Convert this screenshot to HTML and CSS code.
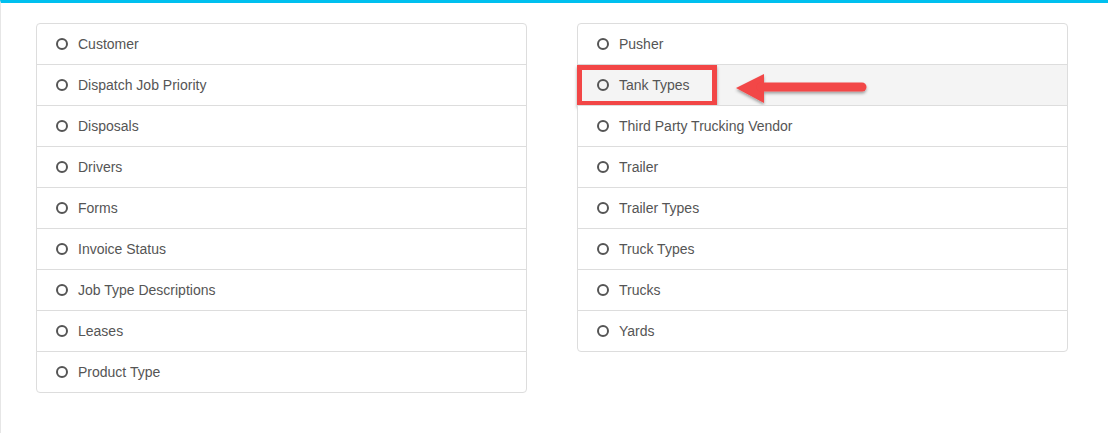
FILE: index.html
```html
<!DOCTYPE html>
<html>
<head>
<meta charset="utf-8">
<link rel="stylesheet" href="styles.css">
</head>
<body>
<div class="page">
  <div class="columns">
    <ul class="list">
      <li class="item"><span class="dot"></span>Customer</li>
      <li class="item"><span class="dot"></span>Dispatch Job Priority</li>
      <li class="item"><span class="dot"></span>Disposals</li>
      <li class="item"><span class="dot"></span>Drivers</li>
      <li class="item"><span class="dot"></span>Forms</li>
      <li class="item"><span class="dot"></span>Invoice Status</li>
      <li class="item"><span class="dot"></span>Job Type Descriptions</li>
      <li class="item"><span class="dot"></span>Leases</li>
      <li class="item"><span class="dot"></span>Product Type</li>
    </ul>
    <ul class="list">
      <li class="item"><span class="dot"></span>Pusher</li>
      <li class="item hover"><span class="dot"></span>Tank Types
        <span class="highlight"></span>
        <svg class="arrow" width="140" height="36" viewBox="0 0 140 36">
          <defs>
            <filter id="sh" x="-10%" y="-30%" width="120%" height="170%">
              <feDropShadow dx="0" dy="2" stdDeviation="1.5" flood-color="#000" flood-opacity="0.35"/>
            </filter>
          </defs>
          <g filter="url(#sh)" fill="#f24646">
            <polygon points="3,16 31,2 31,31"/>
            <line x1="28" y1="15" x2="129" y2="15" stroke="#f24646" stroke-width="9" stroke-linecap="round"/>
          </g>
        </svg>
      </li>
      <li class="item"><span class="dot"></span>Third Party Trucking Vendor</li>
      <li class="item"><span class="dot"></span>Trailer</li>
      <li class="item"><span class="dot"></span>Trailer Types</li>
      <li class="item"><span class="dot"></span>Truck Types</li>
      <li class="item"><span class="dot"></span>Trucks</li>
      <li class="item"><span class="dot"></span>Yards</li>
    </ul>
  </div>
</div>
</body>
</html>
```
FILE: styles.css
```css
html, body {
  margin: 0;
  padding: 0;
  background: #fff;
}
body {
  font-family: "Liberation Sans", Arial, sans-serif;
  font-size: 14px;
  color: #555;
}
.page {
  border-top: 3px solid #00c0ef;
  border-left: 1px solid #e6e6e6;
  height: 100vh;
  box-sizing: border-box;
}
.columns {
  display: flex;
  gap: 50px;
  padding: 20px 40px 0 35px;
  align-items: flex-start;
}
.list {
  list-style: none;
  margin: 0;
  padding: 0;
  width: 491px;
  flex: 0 0 491px;
}
.item {
  position: relative;
  display: flex;
  align-items: center;
  height: 40px;
  padding: 0 19px;
  border: 1px solid #ddd;
  margin-bottom: -1px;
  background: #fff;
  line-height: 20px;
}
.item:first-child {
  border-top-left-radius: 4px;
  border-top-right-radius: 4px;
}
.item:last-child {
  border-bottom-left-radius: 4px;
  border-bottom-right-radius: 4px;
  margin-bottom: 0;
}
.item.hover {
  background: #f4f4f4;
}
.dot {
  display: inline-block;
  width: 8px;
  height: 8px;
  border: 2px solid #555;
  border-radius: 50%;
  margin-right: 10px;
  flex: 0 0 auto;
}
.highlight {
  position: absolute;
  left: -1px;
  top: 0;
  width: 130px;
  height: 31px;
  border: 5px solid #f24646;
  box-shadow: 0 2px 3px rgba(0,0,0,0.35);
}
.arrow {
  position: absolute;
  left: 155px;
  top: 7px;
}
```
